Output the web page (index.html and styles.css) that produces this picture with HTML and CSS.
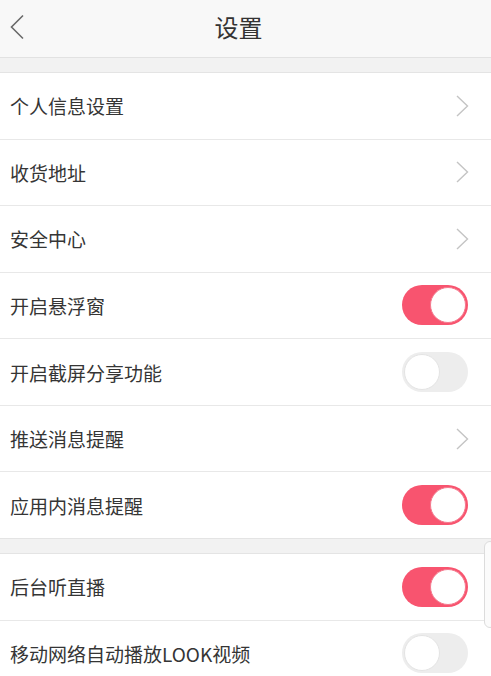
FILE: index.html
```html
<!DOCTYPE html>
<html lang="zh-CN">
<head>
<meta charset="utf-8">
<title>设置</title>
<link rel="stylesheet" href="styles.css">
</head>
<body>
<header class="topbar">
  <span class="back"><svg width="16" height="26" viewBox="0 0 16 26"><path d="M14 1.5 L2.5 13 L14 24.5" fill="none" stroke="#6a6a6a" stroke-width="1.6"/></svg></span>
  <h1 class="title">设置</h1>
</header>
<section class="group">
  <div class="row"><span class="label">个人信息设置</span><span class="chev"><svg width="13" height="22" viewBox="0 0 13 22"><path d="M1 1 L11.5 11 L1 21" fill="none" stroke="#c4c4c4" stroke-width="1.4"/></svg></span></div>
  <div class="row"><span class="label">收货地址</span><span class="chev"><svg width="13" height="22" viewBox="0 0 13 22"><path d="M1 1 L11.5 11 L1 21" fill="none" stroke="#c4c4c4" stroke-width="1.4"/></svg></span></div>
  <div class="row"><span class="label">安全中心</span><span class="chev"><svg width="13" height="22" viewBox="0 0 13 22"><path d="M1 1 L11.5 11 L1 21" fill="none" stroke="#c4c4c4" stroke-width="1.4"/></svg></span></div>
  <div class="row"><span class="label">开启悬浮窗</span><span class="toggle on"><span class="knob"></span></span></div>
  <div class="row"><span class="label">开启截屏分享功能</span><span class="toggle"><span class="knob"></span></span></div>
  <div class="row"><span class="label">推送消息提醒</span><span class="chev"><svg width="13" height="22" viewBox="0 0 13 22"><path d="M1 1 L11.5 11 L1 21" fill="none" stroke="#c4c4c4" stroke-width="1.4"/></svg></span></div>
  <div class="row"><span class="label">应用内消息提醒</span><span class="toggle on"><span class="knob"></span></span></div>
</section>
<section class="group">
  <div class="row"><span class="label">后台听直播</span><span class="toggle on"><span class="knob"></span></span></div>
  <div class="row"><span class="label">移动网络自动播放LOOK视频</span><span class="toggle"><span class="knob"></span></span></div>
</section>
<div class="scrollthumb"></div>
</body>
</html>
```
FILE: styles.css
```css
html, body {
  margin: 0;
  padding: 0;
}
body {
  background: #f2f2f2;
  font-family: "Noto Sans CJK SC", "Noto Sans", sans-serif;
  color: #353535;
  height: 676px;
  overflow: hidden;
  position: relative;
}
.topbar {
  height: 57px;
  background: #f8f8f8;
  border-bottom: 1px solid #e2e2e2;
  display: flex;
  align-items: center;
  justify-content: center;
  position: relative;
}
.back {
  position: absolute;
  left: 9px;
  top: 14px;
  display: flex;
}
.title {
  margin: 0 14px 4px 0;
  font-size: 24px;
  font-weight: normal;
  color: #333;
  line-height: 1;
}
.group {
  margin-top: 14px;
  background: #fff;
  border-top: 1px solid #e4e4e4;
}
.row {
  box-sizing: border-box;
  height: 66.57px;
  border-bottom: 1px solid #e8e8e8;
  display: flex;
  align-items: center;
  justify-content: space-between;
  padding: 0 23px 0 10px;
}
.group .row:last-child {
  border-bottom-color: #e4e4e4;
}
.label {
  font-size: 19px;
  line-height: 1;
}
.chev {
  display: flex;
  margin-right: -1px;
}
.toggle {
  box-sizing: border-box;
  width: 66px;
  height: 40px;
  border-radius: 20px;
  background: #ededed;
  display: flex;
  align-items: center;
  padding: 0 2px;
  justify-content: flex-start;
}
.toggle .knob {
  box-sizing: border-box;
  width: 36px;
  height: 36px;
  border-radius: 50%;
  background: #fff;
  border: 1px solid #e4e4e4;
}
.toggle.on {
  background: #f8546f;
  justify-content: flex-end;
}
.toggle.on .knob {
  border-color: #f47a8e;
}
.scrollthumb {
  position: absolute;
  left: 484px;
  top: 541px;
  width: 12px;
  height: 87px;
  box-sizing: border-box;
  border: 1px solid #dcdcdc;
  border-radius: 6px;
  background: #fbfbfb;
}
```
